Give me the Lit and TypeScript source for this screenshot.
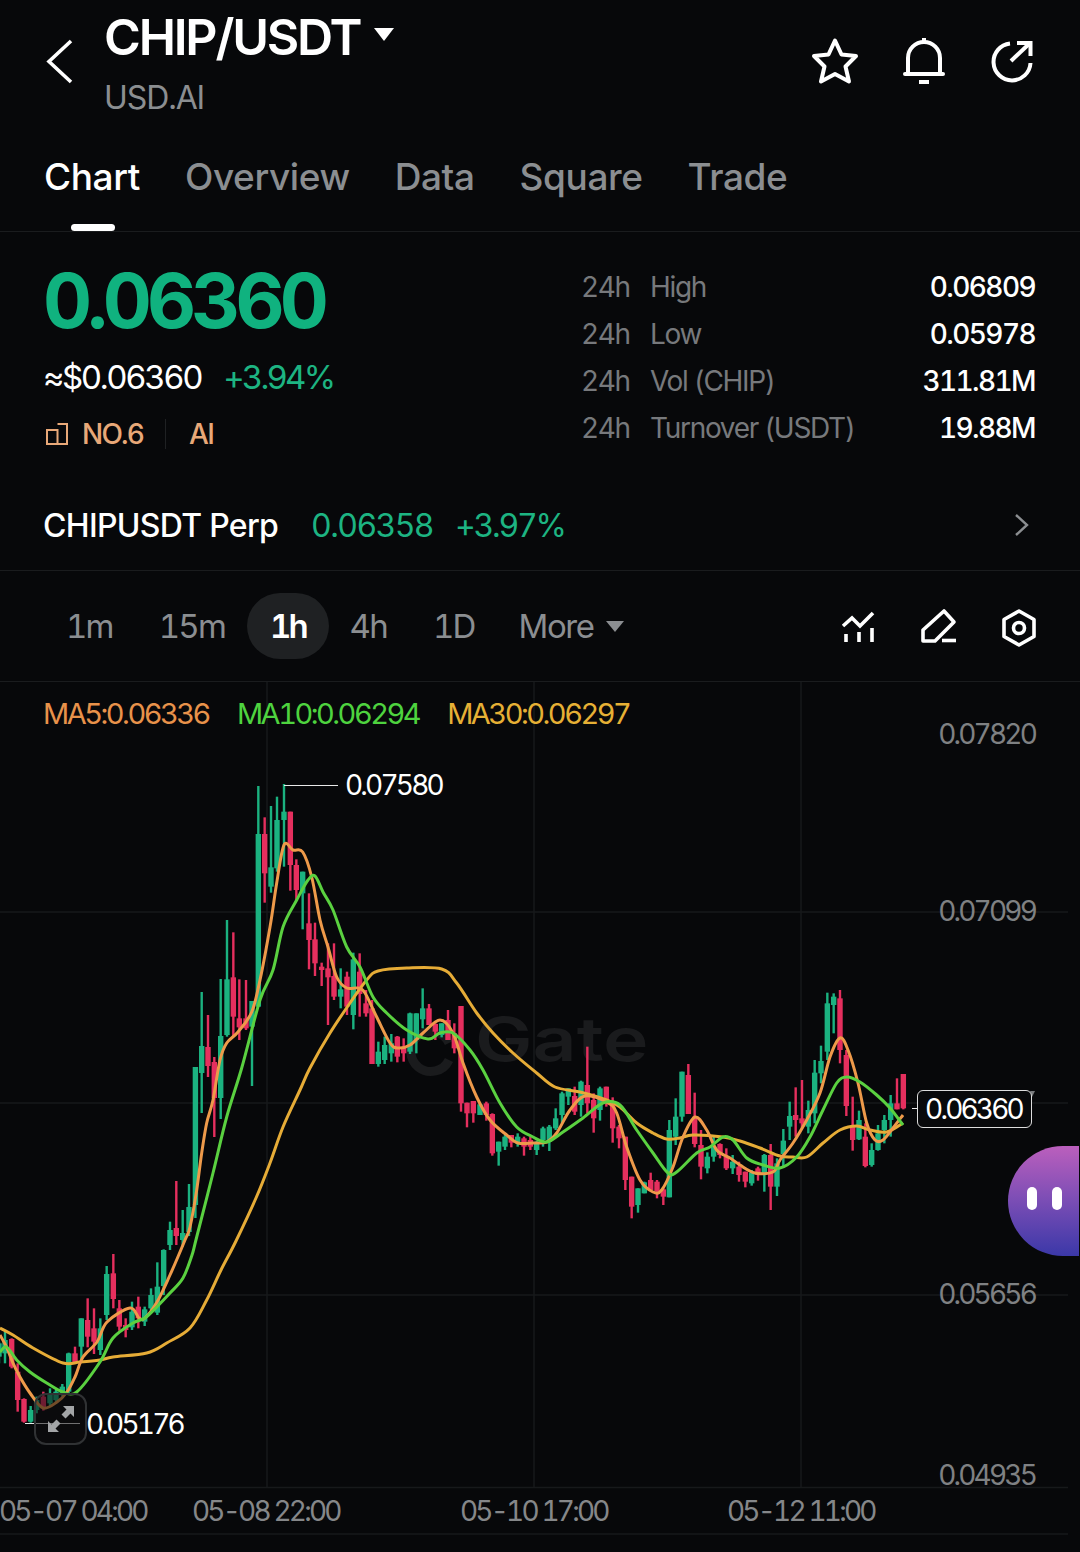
import { LitElement, html, css, svg } from "lit";
import { customElement } from "lit/decorators.js";

type C = [number, number, number, number, number, string];
const seg = (ox: number, oy: number, list: C[]): C[] =>
  list.map(([x, a, b, c, d, k]) => [ox + x / 3, oy + a / 3, oy + b / 3, oy + c / 3, oy + d / 3, k]);
const g = "g", r = "r";

const candles: C[] = [
  ...seg(0, 1200, [
    [-3, 425, 490, 430, 470, g], [15, 395, 490, 420, 460, g], [35, 415, 505, 417, 500, r], [53, 490, 635, 515, 600, r],
    [72, 595, 668, 597, 665, r], [92, 618, 668, 630, 665, g], [110, 590, 640, 600, 630, g], [130, 575, 632, 590, 625, r],
    [150, 565, 620, 580, 610, g], [168, 570, 605, 575, 600, g], [187, 552, 590, 560, 580, g], [206, 458, 582, 460, 575, g],
    [225, 440, 490, 460, 488, r], [244, 355, 480, 355, 440, g], [263, 295, 442, 360, 410, r], [282, 325, 462, 385, 425, r],
    [301, 355, 465, 385, 450, g], [320, 198, 360, 222, 345, g], [340, 162, 325, 220, 297, r], [358, 300, 392, 325, 380, r],
    [377, 355, 412, 375, 390, r], [396, 305, 390, 335, 382, g], [415, 290, 385, 320, 355, r], [434, 320, 378, 328, 365, g],
    [453, 265, 330, 285, 325, g], [472, 187, 345, 260, 338, g], [491, 148, 285, 150, 258, g], [510, 65, 150, 90, 135, g],
  ]),
  [176.3, 1181, 1245, 1228, 1236, r], [182.7, 1210, 1247, 1233, 1240, g], [189, 1184, 1236, 1207, 1232, g],
  [195.4, 1067, 1218, 1067, 1205, g], [201.7, 992, 1113, 1046, 1073, g], [208, 1015, 1077, 1047, 1066, r],
  [214.3, 1057, 1137, 1062, 1098, r], [220.7, 979, 1119, 1036, 1098, g],
  ...seg(180, 770, [
    [141, 450, 800, 628, 795, g], [160, 487, 800, 622, 740, r], [178, 628, 810, 745, 772, r], [198, 630, 780, 745, 775, r],
    [216, 693, 948, 693, 770, g], [235, 48, 710, 192, 710, g], [254, 142, 398, 192, 310, r], [273, 108, 368, 292, 350, g],
    [291, 80, 305, 150, 295, g], [312, 42, 290, 125, 150, g], [331, 125, 362, 125, 285, r], [349, 268, 390, 285, 360, r],
    [368, 305, 478, 305, 370, g], [387, 370, 598, 460, 510, r], [405, 458, 618, 508, 580, r], [425, 578, 648, 590, 600, r],
    [444, 520, 765, 595, 622, r], [462, 520, 690, 618, 680, r], [482, 595, 715, 658, 680, g], [501, 605, 735, 620, 710, r],
    [520, 548, 778, 568, 735, g], [539, 550, 740, 605, 672, r], [558, 660, 740, 700, 730, r],
  ]),
  ...seg(340, 960, [
    [96, 120, 312, 145, 312, r], [115, 245, 320, 275, 312, g], [134, 230, 312, 255, 300, g], [154, 222, 305, 250, 280, g],
    [172, 228, 307, 230, 290, r], [191, 235, 305, 262, 280, r], [210, 158, 282, 160, 275, g], [229, 160, 280, 160, 240, g],
    [248, 85, 205, 145, 178, g], [267, 132, 195, 145, 195, r], [286, 190, 240, 192, 215, r],
  ]),
  ...seg(440, 990, [
    [5, 100, 142, 100, 135, g], [24, 60, 150, 90, 150, r], [43, 100, 190, 130, 175, r], [63, 48, 365, 48, 340, r],
    [81, 338, 412, 338, 370, r], [100, 333, 398, 333, 370, r], [120, 340, 375, 343, 375, g], [139, 335, 392, 340, 375, r],
    [157, 370, 497, 372, 490, r], [176, 455, 527, 455, 485, g], [195, 435, 480, 440, 470, g], [214, 435, 472, 435, 458, r],
    [233, 430, 470, 440, 460, g], [252, 440, 497, 445, 470, r], [271, 440, 480, 450, 470, r], [290, 452, 495, 460, 480, g],
    [309, 410, 470, 415, 450, g], [328, 405, 483, 410, 455, g], [347, 355, 420, 385, 415, g], [366, 305, 400, 310, 375, g],
    [385, 295, 345, 295, 320, g], [404, 290, 375, 318, 365, r], [423, 272, 380, 275, 345, g], [442, 170, 370, 285, 340, r],
    [461, 310, 428, 330, 385, r], [480, 290, 392, 295, 360, g], [499, 290, 350, 290, 335, r], [518, 322, 458, 335, 415, r],
    [537, 405, 475, 410, 445, r], [556, 440, 600, 440, 570, r], [575, 560, 685, 560, 650, r], [594, 595, 668, 595, 645, g],
    [613, 575, 610, 577, 610, g], [632, 548, 600, 570, 600, r], [651, 570, 625, 575, 605, r], [670, 595, 645, 598, 620, r],
    [688, 390, 622, 420, 622, g], [707, 325, 465, 380, 440, g], [726, 245, 395, 245, 380, g], [745, 222, 372, 255, 372, r],
    [764, 308, 472, 380, 462, r], [783, 420, 568, 465, 530, r], [802, 487, 550, 500, 535, g], [821, 440, 515, 470, 500, g],
    [840, 460, 505, 462, 495, r], [859, 475, 540, 500, 535, r], [878, 495, 552, 515, 535, g], [897, 515, 575, 530, 555, r],
    [916, 545, 592, 545, 575, r], [935, 540, 587, 548, 580, g], [954, 530, 572, 535, 555, r], [973, 492, 605, 495, 550, g],
    [992, 462, 660, 495, 590, r], [1011, 505, 618, 520, 590, g],
  ]),
  ...seg(780, 980, [
    [10, 447, 560, 482, 522, g], [29, 365, 480, 408, 440, g], [47, 322, 470, 405, 420, r], [66, 300, 445, 415, 430, r],
    [85, 362, 460, 390, 440, g], [104, 240, 430, 278, 400, g], [123, 197, 310, 243, 280, g], [142, 38, 240, 70, 215, g],
    [161, 40, 160, 50, 75, g], [180, 30, 250, 55, 210, r], [199, 210, 408, 225, 378, r], [218, 350, 512, 440, 480, r],
    [237, 392, 480, 420, 478, g], [256, 430, 562, 470, 558, r], [275, 490, 560, 510, 555, g], [294, 435, 512, 460, 510, g],
    [313, 405, 490, 420, 450, g], [332, 345, 470, 370, 420, g], [351, 295, 388, 370, 388, r], [370, 282, 388, 282, 385, r],
  ]),
];

const ma5 = [0, 1335, 7, 1348, 13, 1363, 20, 1377, 30, 1393, 43, 1408, 57, 1402, 67, 1392, 75, 1377, 83, 1357, 97, 1342, 107, 1322, 130, 1308, 139, 1318, 145, 1318, 157, 1302, 170, 1275, 185, 1240, 190, 1227, 196.7, 1190, 201.7, 1153, 206.7, 1123, 213, 1100, 220, 1060, 226.7, 1043, 238, 1032, 251.7, 1012, 260, 980, 270, 927, 276.7, 883, 284, 845, 293, 850, 302.7, 852, 311.7, 877, 320, 920, 328, 947, 336.7, 977, 346.7, 988, 358, 988, 365, 993, 376.7, 1017, 390, 1043, 398, 1048, 410, 1045, 423, 1033, 440, 1020, 453, 1033, 463, 1063, 476.7, 1097, 490, 1120, 506.7, 1135, 518, 1143, 533, 1143, 546.7, 1142, 556.7, 1133, 570, 1110, 585, 1096, 606.7, 1102, 616.7, 1113, 626.7, 1147, 640, 1180, 653, 1192, 661.7, 1190, 673, 1167, 683, 1137, 695, 1117, 706.7, 1130, 716.7, 1150, 730, 1158, 740, 1165, 755, 1173, 773, 1172, 780, 1160, 793, 1143, 806.7, 1120, 820, 1093, 830, 1057, 840, 1038, 848, 1050, 858, 1083, 866.7, 1123, 875, 1140, 883, 1140, 893, 1128, 903, 1115];
const ma10 = [0, 1352, 6.7, 1347, 16.7, 1360, 30, 1372, 46.7, 1383, 63, 1392, 76.7, 1392, 100, 1362, 113, 1338, 133, 1323, 145, 1318, 156.7, 1307, 170, 1293, 183, 1278, 191.7, 1256, 196.7, 1237, 213, 1173, 226.7, 1117, 241.7, 1068, 260, 1000, 273, 970, 283, 927, 296.7, 900, 308, 880, 315, 876, 323, 892, 333, 910, 346.7, 947, 360, 967, 373, 997, 386.7, 1013, 406.7, 1030, 428, 1039, 440, 1033, 453, 1033, 470, 1050, 483, 1070, 500, 1103, 516.7, 1127, 533, 1137, 546.7, 1142, 563, 1132, 583, 1118, 603, 1103, 620, 1105, 636.7, 1130, 653, 1153, 668, 1173, 676.7, 1172, 696.7, 1153, 710, 1147, 723, 1137, 733, 1140, 746.7, 1158, 763, 1165, 780, 1168, 796.7, 1157, 810, 1137, 823, 1110, 836.7, 1083, 846.7, 1077, 860, 1082, 876.7, 1095, 890, 1108, 903, 1125];
const ma30 = [0, 1328, 13, 1335, 33, 1348, 63, 1363, 80, 1362, 100, 1360, 113, 1357, 146.7, 1353, 166.7, 1343, 190, 1328, 206.7, 1300, 221, 1270, 236, 1241, 256, 1198, 270, 1163, 283, 1127, 300, 1090, 310, 1068, 330, 1033, 350, 1003, 366.7, 980, 378, 971, 406.7, 968, 441.7, 969, 456.7, 983, 476.7, 1013, 493, 1033, 513, 1053, 536.7, 1073, 555, 1087, 580, 1092, 606.7, 1100, 620, 1107, 636.7, 1123, 653, 1133, 666.7, 1139, 680, 1138, 693, 1135, 723, 1137, 740, 1141, 760, 1148, 780, 1156, 793, 1157, 806.7, 1157, 823, 1143, 840, 1130, 856.7, 1126, 870, 1130, 886.7, 1132, 903, 1123];

const smooth = (p: number[]) => {
  const pts: [number, number][] = [];
  for (let i = 0; i < p.length; i += 2) pts.push([p[i], p[i + 1]]);
  let d = `M${pts[0][0]} ${pts[0][1]}`;
  for (let i = 0; i < pts.length - 1; i++) {
    const a = pts[Math.max(i - 1, 0)], b = pts[i], c = pts[i + 1], e = pts[Math.min(i + 2, pts.length - 1)];
    const c1x = b[0] + (c[0] - a[0]) / 6, c1y = b[1] + (c[1] - a[1]) / 6;
    const c2x = c[0] - (e[0] - b[0]) / 6, c2y = c[1] - (e[1] - b[1]) / 6;
    d += `C${c1x.toFixed(1)} ${c1y.toFixed(1)} ${c2x.toFixed(1)} ${c2y.toFixed(1)} ${c[0]} ${c[1]}`;
  }
  return d;
};

@customElement("app-root")
export class AppRoot extends LitElement {
  static styles = css`
    :host { display: block; width: 1080px; height: 1552px; background: #07080a; color: #fff; overflow: hidden;
      font-family: Inter, "Liberation Sans", sans-serif; -webkit-font-smoothing: antialiased; font-variant-numeric: tabular-nums; }
    .top { height: 232px; box-sizing: border-box; border-bottom: 1px solid #1a1c1e; position: relative; }
    .nav { display: flex; height: 140px; }
    .back { margin: 38px 0 0 46px; width: 30px; height: 48px; flex: none; }
    .titles { margin-left: 28px; padding-top: 12px; }
    .title-line { display: flex; height: 50px; align-items: center; }
    .title { font-size: 50px; font-weight: 600; line-height: 50px; letter-spacing: -2.2px; }
    .caret { margin-left: 14px; width: 20px; height: 14px; margin-top: -4px; }
    .sub { font-size: 32px; line-height: 40px; margin-top: 16px; color: #8b8e91; letter-spacing: -1.1px; }
    .nav-icons { margin-left: auto; display: flex; padding: 36px 40px 0 0; gap: 35px; height: 52px; }
    .nav-icons svg { width: 54px; height: 52px; }
    .tabs { display: flex; gap: 45px; padding: 9px 0 0 44px; font-size: 37px; line-height: 56px; color: #8b8e91; font-weight: 500; letter-spacing: -0.4px; }
    .tabs .on { color: #fff; position: relative; }
    .bar { position: absolute; left: 27px; top: 75px; width: 44px; height: 7px; background: #fff; border-radius: 4px; }

    .summary { height: 339px; box-sizing: border-box; border-bottom: 1px solid #1a1c1e; padding-top: 27px; }
    .grid { display: grid; grid-template-columns: 536px 1fr; height: 220px; padding: 0 45px; }
    .price { font-size: 76px; line-height: 82px; font-weight: 700; color: #10b27f; letter-spacing: -4.9px; margin-left: -2px; }
    .sub-price { display: flex; margin-top: 16px; margin-left: -2px; font-size: 33px; line-height: 40px; letter-spacing: -2.4px; }
    .pct { color: #1db482; margin-left: 22px; letter-spacing: -2.8px; }
    .tags { display: flex; align-items: center; height: 30px; margin-top: 22px; font-size: 28px; color: #e8a878; letter-spacing: -1.8px; font-weight: 500; }
    .tags svg { width: 22px; height: 22px; margin: 0 14px 0 1px; }
    .sep { width: 1px; height: 30px; background: #1f2123; margin: 0 23px 0 22px; }
    .stats { padding-top: 4px; }
    .stat { display: flex; height: 47px; align-items: center; font-size: 28px; color: #77797c; letter-spacing: -1.3px; }
    .stat .k { width: 69px; letter-spacing: -1.4px; }
    .stat .v { margin-left: auto; color: #fff; font-weight: 500; letter-spacing: -1.6px; }
    .perp { display: flex; align-items: center; height: 50px; margin-top: 21px; padding: 0 50px 0 43px; font-size: 32px; }
    .perp .name { font-weight: 500; letter-spacing: -0.7px; }
    .perp .up { color: #1db482; letter-spacing: -1.6px; }
    .perp .p1 { margin-left: 33px; }
    .perp .up.p2 { margin-left: 22px; letter-spacing: -2.2px; }
    .perp svg { margin-left: auto; width: 16px; height: 24px; }

    .intervals { display: flex; align-items: center; height: 111px; box-sizing: border-box; border-bottom: 1px solid #1a1c1e; padding: 0 39px 0 43px; font-size: 33px; color: #8b8e91; letter-spacing: -1.8px; }
    .iv { height: 66px; line-height: 66px; padding: 0 23px; border-radius: 33px; }
    .iv.on { background: #1f2123; color: #fff; font-weight: 600; letter-spacing: -3px; margin: 0 -2px 0 -1px; }
    .more { margin-left: -2px; letter-spacing: -1.4px; }
    .more svg { width: 18px; height: 11px; margin-left: 12px; vertical-align: 6px; }
    .tools { margin-left: auto; display: flex; gap: 36px; margin-top: 3px; }
    .tools svg { width: 44px; height: 44px; }

    .chart { position: relative; height: 870px; }
    .plot { position: absolute; left: 0; top: 0; width: 1080px; height: 870px; }
    .legend { position: relative; display: flex; padding: 17px 0 0 43px; font-size: 29px; line-height: 30px; letter-spacing: -2.5px; gap: 28px; }
    .ma5 { color: #e8924a; } .ma10 { color: #4ed33f; } .ma30 { color: #e6b035; }
    .lbl { position: absolute; font-size: 28px; line-height: 32px; white-space: nowrap; letter-spacing: -2.8px; }
    .y { right: 45px; color: #7f8183; }
    .x { color: #858789; top: 813px; letter-spacing: -2.8px; }
    .w { color: #fff; }
    .tag { position: absolute; left: 917px; top: 408px; width: 115px; height: 38px; box-sizing: border-box; border: 1.5px solid #ddd; border-radius: 6px; background: #08090b;
      display: flex; align-items: center; justify-content: center; font-size: 28px; letter-spacing: -2.8px; padding-right: 2px; }
    .expand { position: absolute; left: 34px; top: 711px; width: 53px; height: 52px; box-sizing: border-box; border: 2px solid #303234; border-radius: 12px; background: rgba(12,13,15,.55); display: flex; align-items: center; justify-content: center; }
    .expand svg { width: 32px; height: 32px; }
    .bubble { position: absolute; left: 1008px; top: 464px; width: 71px; height: 110px; border-radius: 55px 0 0 55px;
      background: linear-gradient(180deg, #bb5fbd 0%, #7a4db5 50%, #3b38a8 100%); display: flex; gap: 15px; padding-left: 19px; box-sizing: border-box; align-items: center; }
    .bubble i { width: 10px; height: 23px; background: #fff; border-radius: 5px; margin-top: -6px; }
    .mark { position: absolute; left: 475px; top: 322px; font-size: 60px; line-height: 70px; font-weight: 600; color: #1a1b1d; letter-spacing: 0; transform: scaleX(1.28); transform-origin: left center; }
  `;

  render() {
    const color: Record<string, string> = { g: "#1bb280", r: "#e52f5e" };
    return html`
      <div class="top">
        <div class="nav">
          <svg class="back" viewBox="0 0 30 48"><path d="M25 3 L3 23.5 L25 44" fill="none" stroke="#fff" stroke-width="3.6"/></svg>
          <div class="titles">
            <div class="title-line"><span class="title">CHIP/USDT</span>
              <svg class="caret" viewBox="0 0 20 14"><path d="M0 0 H20 L10 13 Z" fill="#fff"/></svg></div>
            <div class="sub">USD.AI</div>
          </div>
          <div class="nav-icons">
            <svg viewBox="0 0 54 52"><path d="M27 4.5 L33.5 18.5 L48 20 L37.5 30.5 L41 45.5 L27 38 L13 45.5 L16.5 30.5 L6 20 L20.5 18.5 Z" fill="none" stroke="#fff" stroke-width="4" stroke-linejoin="round"/></svg>
            <svg viewBox="0 0 54 52"><path d="M11 38 V22 a16 16 0 0 1 32 0 V38" fill="none" stroke="#fff" stroke-width="4"/><path d="M8 38 H46" stroke="#fff" stroke-width="4" stroke-linecap="round"/><path d="M22 46 H32" stroke="#fff" stroke-width="4"/><path d="M27 2 V7" stroke="#fff" stroke-width="4"/></svg>
            <svg viewBox="0 0 54 52"><path d="M24 7.5 A18.5 18.5 0 1 0 44.5 27" fill="none" stroke="#fff" stroke-width="4"/><path d="M25 25 L44 7" stroke="#fff" stroke-width="4"/><path d="M31 7 H44.5 V20" fill="none" stroke="#fff" stroke-width="4"/></svg>
          </div>
        </div>
        <div class="tabs">
          <span class="on">Chart<span class="bar"></span></span><span>Overview</span><span>Data</span><span>Square</span><span>Trade</span>
        </div>
      </div>

      <div class="summary">
        <div class="grid">
          <div>
            <div class="price">0.06360</div>
            <div class="sub-price"><span>≈$0.06360</span><span class="pct">+3.94%</span></div>
            <div class="tags">
              <svg viewBox="0 0 22 22"><path d="M1 7 H11.5 V21 H1 Z M11.5 1 H21 V21 H11.5" fill="none" stroke="#e8a878" stroke-width="2"/></svg>
              <span>NO.6</span><span class="sep"></span><span>AI</span>
            </div>
          </div>
          <div class="stats">
            <div class="stat"><span class="k">24h</span><span>High</span><span class="v">0.06809</span></div>
            <div class="stat"><span class="k">24h</span><span>Low</span><span class="v">0.05978</span></div>
            <div class="stat"><span class="k">24h</span><span>Vol (CHIP)</span><span class="v">311.81M</span></div>
            <div class="stat"><span class="k">24h</span><span>Turnover (USDT)</span><span class="v">19.88M</span></div>
          </div>
        </div>
        <div class="perp">
          <span class="name">CHIPUSDT Perp</span><span class="up p1">0.06358</span><span class="up p2">+3.97%</span>
          <svg viewBox="0 0 16 24"><path d="M2 2 L13 12 L2 22" fill="none" stroke="#8b8e91" stroke-width="2.4"/></svg>
        </div>
      </div>

      <div class="intervals">
        <span class="iv">1m</span><span class="iv">15m</span><span class="iv on">1h</span><span class="iv">4h</span><span class="iv">1D</span>
        <span class="iv more">More<svg viewBox="0 0 18 11"><path d="M0 0 H18 L9 11 Z" fill="#8b8e91"/></svg></span>
        <div class="tools">
          <svg viewBox="0 0 44 44"><g fill="none" stroke="#fff" stroke-width="3.6"><path d="M6 20 L15 12 L23 20 L36 7"/><path d="M9 36 V28 M22 36 V26 M35 36 V22"/></g></svg>
          <svg viewBox="0 0 44 44"><g fill="none" stroke="#fff" stroke-width="3.6"><path d="M27 5 L37 16 L18 35 H6 V24 Z" stroke-linejoin="round"/><path d="M25 34.5 H39"/></g></svg>
          <svg viewBox="0 0 44 44"><g fill="none" stroke="#fff" stroke-width="3.6"><path d="M22 5 L37 13.5 V30.5 L22 39 L7 30.5 V13.5 Z" stroke-linejoin="round"/><circle cx="22" cy="22" r="5.5"/></g></svg>
        </div>
      </div>

      <div class="chart">
        <div class="mark">Gate</div>
        <svg class="plot" viewBox="0 682 1080 870">
          <g stroke="#17191b" stroke-width="1.5">
            <path d="M267 682 V1487 M534 682 V1487 M801 682 V1487 M0 912 H1068 M0 1103 H1068 M0 1295 H1068 M0 1487.5 H1068 M0 1534 H1068"/>
          </g>
          <g fill="none" stroke="#1a1b1d" stroke-width="9"><path d="M449 1043 A20 20 0 1 0 449 1060"/></g>
          ${candles.map(([x, wt, wb, bt, bb, k]) => svg`
            <rect x=${x - 1.2} y=${wt} width="2.4" height=${wb - wt} fill=${color[k]} />
            <rect x=${x - 2.7} y=${bt} width="5.4" height=${Math.max(bb - bt, 1.5)} fill=${color[k]} />`)}
          <path d=${smooth(ma30)} fill="none" stroke="#e6ac37" stroke-width="3"/>
          <path d=${smooth(ma5)} fill="none" stroke="#ee9a4a" stroke-width="3"/>
          <path d=${smooth(ma10)} fill="none" stroke="#5ad140" stroke-width="3"/>
          <path d="M284 785.5 H338 M25 1423.5 H80 M912 1108.5 H917" stroke="#e8e8e8" stroke-width="1.2" fill="none"/>
          <path d="M1030 1091 h5 l-3 6 Z" fill="#77797c"/>
        </svg>
        <div class="legend"><span class="ma5">MA5:0.06336</span><span class="ma10">MA10:0.06294</span><span class="ma30">MA30:0.06297</span></div>
        <span class="lbl y" style="top:36px">0.07820</span>
        <span class="lbl y" style="top:213px">0.07099</span>
        <span class="lbl y" style="top:596px">0.05656</span>
        <span class="lbl y" style="top:777px">0.04935</span>
        <span class="lbl x" style="left:-1px">05-07 04:00</span>
        <span class="lbl x" style="left:192px">05-08 22:00</span>
        <span class="lbl x" style="left:460px">05-10 17:00</span>
        <span class="lbl x" style="left:727px">05-12 11:00</span>
        <span class="lbl w" style="left:345px;top:87px">0.07580</span>
        <div class="expand"><svg viewBox="0 0 32 32"><path d="M18 3 H29 V14 L25.5 10.5 L20.5 15.5 L16.5 11.5 L21.5 6.5 Z M14 29 H3 V18 L6.5 21.5 L11.5 16.5 L15.5 20.5 L10.5 25.5 Z" fill="#a3a5a7"/></svg></div>
        <span class="lbl w" style="left:86px;top:726px">0.05176</span>
        <div class="tag">0.06360</div>
        <div class="bubble"><i></i><i></i></div>
      </div>
    `;
  }
}
